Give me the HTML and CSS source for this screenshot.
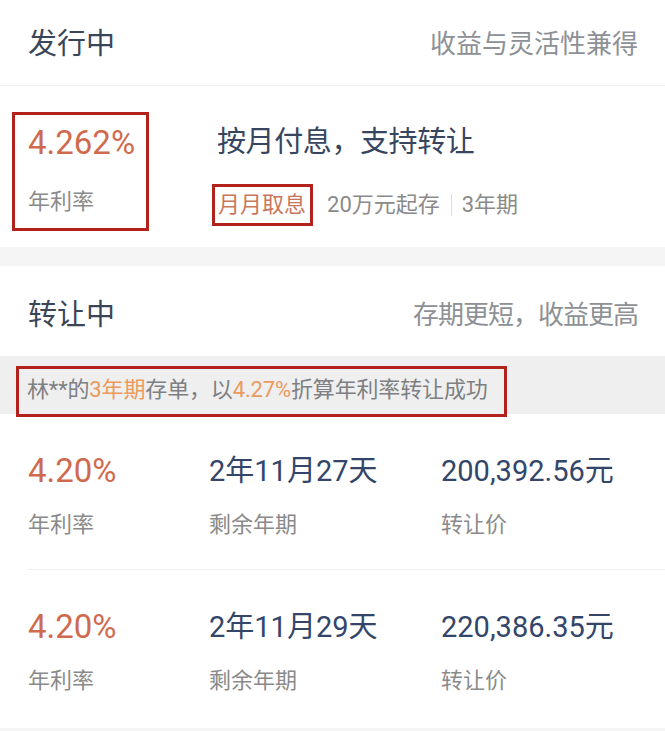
FILE: index.html
```html
<!DOCTYPE html>
<html lang="zh-CN">
<head>
<meta charset="utf-8">
<title>发行中 / 转让中</title>
<link rel="stylesheet" href="styles.css">
</head>
<body>
<div class="page">
  <section class="issue">
    <div class="sec-head">
      <span class="sec-title">发行中</span>
      <span class="sec-sub">收益与灵活性兼得</span>
    </div>
    <div class="product">
      <div class="rate-box">
        <div class="rate">4.262%</div>
        <div class="label">年利率</div>
      </div>
      <div class="prod-info">
        <div class="prod-title">按月付息，支持转让</div>
        <div class="tags">
          <span class="tag">月月取息</span>
          <span class="meta">20万元起存</span>
          <span class="sep"></span>
          <span class="meta">3年期</span>
        </div>
      </div>
    </div>
  </section>
  <div class="gap"></div>
  <section class="transfer">
    <div class="sec-head sec-head-2">
      <span class="sec-title">转让中</span>
      <span class="sec-sub sec-sub-2">存期更短，收益更高</span>
    </div>
    <div class="notice">
      <span class="notice-box">林**的<em>3年期</em>存单，以<em>4.27%</em>折算年利率转让成功</span>
    </div>
    <div class="list">
      <div class="row">
        <div class="cell">
          <div class="rate">4.20%</div>
          <div class="label">年利率</div>
        </div>
        <div class="cell">
          <div class="value">2年11月27天</div>
          <div class="label">剩余年期</div>
        </div>
        <div class="cell">
          <div class="value">200,392.56元</div>
          <div class="label">转让价</div>
        </div>
      </div>
      <div class="row">
        <div class="cell">
          <div class="rate">4.20%</div>
          <div class="label">年利率</div>
        </div>
        <div class="cell">
          <div class="value">2年11月29天</div>
          <div class="label">剩余年期</div>
        </div>
        <div class="cell">
          <div class="value">220,386.35元</div>
          <div class="label">转让价</div>
        </div>
      </div>
    </div>
  </section>
  <div class="gap gap-bottom"></div>
</div>
</body>
</html>
```

FILE: styles.css
```css
* { box-sizing: border-box; }
html, body { margin: 0; padding: 0; background: #ffffff; }
body {
  font-family: Roboto, "Noto Sans CJK SC", sans-serif;
  color: #3a4658;
}
.page { width: 665px; }

.sec-head {
  height: 86px;
  padding: 2px 27px 0 28px;
  display: flex;
  justify-content: space-between;
  align-items: center;
  border-bottom: 1px solid #f1f1f1;
}
.sec-head-2 {
  height: 90px;
  padding-top: 8px;
  border-bottom: none;
}
.sec-title {
  font-size: 29px;
  line-height: 40px;
  color: #3a4658;
}
.sec-sub {
  font-size: 26px;
  line-height: 36px;
  color: #8d9095;
}
.sec-sub-2 { letter-spacing: -1px; }

.product {
  display: flex;
  padding: 26px 0 16px 12px;
  height: 161px;
}
.rate-box {
  width: 137px;
  border: 3px solid #b3211c;
  padding: 8px 0 11px 13px;
}
.rate {
  font-size: 33px;
  line-height: 40px;
  color: #d06a4e;
  margin-bottom: 19px;
}
.rate-box .rate { margin-bottom: 24px; }
.label {
  font-size: 22px;
  line-height: 30px;
  color: #8a8a8a;
}
.prod-info {
  padding-left: 69px;
  padding-top: 10px;
}
.prod-title {
  font-size: 29px;
  line-height: 40px;
  color: #37465e;
  margin-left: -1px;
  letter-spacing: -0.4px;
}
.tags {
  display: flex;
  align-items: center;
  margin-top: 22px;
  margin-left: -6px;
}
.tag {
  border: 3px solid #b3211c;
  padding: 0 4px 0 3px;
  font-size: 22px;
  line-height: 36px;
  color: #c9775a;
  margin-right: 14px;
}
.meta {
  font-size: 22px;
  line-height: 30px;
  color: #8a8a8a;
}
.sep {
  width: 1px;
  height: 22px;
  background: #dddddd;
  margin: 0 10px 0 11px;
}

.gap {
  height: 19px;
  background: #f5f5f5;
}
.gap-bottom { height: 10px; }

.notice {
  height: 58px;
  background: #efefef;
  padding: 10px 0 0 16px;
}
.notice-box {
  display: inline-block;
  border: 3px solid #b3211c;
  padding: 1px 16px 4px 8px;
  font-size: 22px;
  line-height: 40px;
  color: #7d7f83;
  letter-spacing: -0.15px;
}
.notice-box em {
  font-style: normal;
  color: #eb9a5c;
}

.row {
  margin-left: 28px;
  padding: 37px 0 29px 0;
  display: grid;
  grid-template-columns: 181px 232px 1fr;
  border-bottom: 1px solid #f0f0f0;
}
.row:last-child { border-bottom: none; padding-bottom: 32px; }
.value {
  font-size: 29px;
  line-height: 40px;
  color: #33466a;
  margin-bottom: 19px;
}
```
